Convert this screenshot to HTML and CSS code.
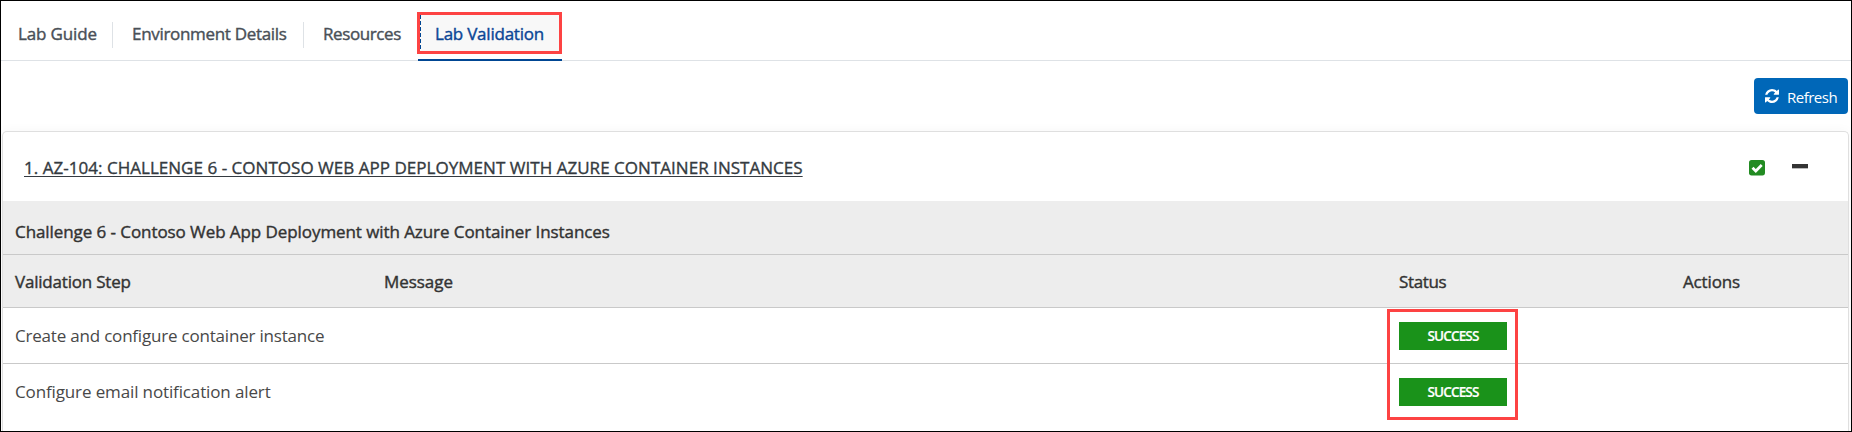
FILE: index.html
```html
<!DOCTYPE html>
<html lang="en">
<head>
<meta charset="utf-8">
<title>Lab Validation</title>
<link rel="stylesheet" href="styles.css">
</head>
<body>
<div class="frame">
  <nav class="tabs">
    <a class="tab tab-guide"><span class="t-guide">Lab Guide</span></a>
    <a class="tab tab-env"><span class="t-env">Environment Details</span></a>
    <a class="tab tab-res"><span class="t-res">Resources</span></a>
    <a class="tab tab-active"><span class="t-val">Lab Validation</span><i class="highlight"></i></a>
  </nav>
  <div class="toolbar">
    <button class="refresh">
      <svg width="14" height="14" viewBox="0 0 1536 1536" fill="#fff"><path d="M1511 928q0 5-1 7-64 268-268 434.500T764 1536q-146 0-282.500-55T238 1324l-129 129q-19 19-45 19t-45-19-19-45V960q0-26 19-45t45-19h448q26 0 45 19t19 45-19 45l-137 137q71 66 161 102t187 36q134 0 250-65t186-179q11-17 53-117 8-23 30-23h192q13 0 22.500 9.500t9.500 22.500zm25-800v448q0 26-19 45t-45 19h-448q-26 0-45-19t-19-45 19-45l138-138Q969 256 768 256q-134 0-250 65T332 500q-11 17-53 117-8 23-30 23H50q-13 0-22.500-9.500T18 608v-7q65-268 270-434.500T768 0q146 0 284 55.500T1297 212l130-129q19-19 45-19t45 19 19 45z"/></svg>
      <span class="t-refresh">Refresh</span>
    </button>
  </div>
  <section class="card">
    <header class="card-head">
      <a class="title">1. AZ-104: CHALLENGE 6 - CONTOSO WEB APP DEPLOYMENT WITH AZURE CONTAINER INSTANCES</a>
      <svg class="check" width="16" height="16" viewBox="0 0 16 16"><rect width="16" height="15.400" rx="2.600" fill="#228b22"/><path d="M3.500 7.700 6.800 11 12.700 5" fill="none" stroke="#fff" stroke-width="2.700"/></svg>
      <span class="minus"></span>
    </header>
    <div class="subtitle"><span class="t-sub">Challenge 6 - Contoso Web App Deployment with Azure Container Instances</span></div>
    <div class="row head">
      <span class="t-step">Validation Step</span><span class="t-msg">Message</span><span class="t-status">Status</span><span class="t-actions">Actions</span>
    </div>
    <div class="row">
      <span class="t-create">Create and configure container instance</span><span></span><span class="badge">SUCCESS</span><span></span>
      <i class="status-highlight"></i>
    </div>
    <div class="row last">
      <span class="t-conf">Configure email notification alert</span><span></span><span class="badge">SUCCESS</span><span></span>
    </div>
  </section>
</div>
</body>
</html>
```
FILE: styles.css
```css
* { box-sizing: border-box; }
body { margin: 0; background: #fff; font-family: "Open Sans", "Noto Sans", sans-serif; font-size: 17px; line-height: 24px; color: #333; }
.frame { width: 1852px; height: 432px; border: 1px solid #000; overflow: hidden; }
.tabs { display: flex; height: 60px; border-bottom: 1px solid #dee2e6; padding-top: 11px; }
.tab { position: relative; height: 49px; padding-top: 10px; padding-left: 19px; color: #495057; white-space: nowrap; -webkit-text-stroke: .4px; }
.tab-guide { width: 112px; padding-left: 17px; }
.tab-env { width: 191px; }
.tab-res { width: 114px; }
.tab-guide::after, .tab-env::after, .tab-res::after { content: ""; position: absolute; right: 0; top: 10px; width: 1px; height: 26px; background: #dee2e6; }
.tab-active { width: 144px; padding-left: 17px; color: #0b4696; border-bottom: 2px solid #004693; }
.tab-active .t-val { position: relative; z-index: 1; }
.t-guide { letter-spacing: -.15px; }
.t-env { letter-spacing: -.31px; }
.t-res { letter-spacing: -.4px; }
.t-val { letter-spacing: -.23px; }
.highlight { position: absolute; left: -1px; top: 0; width: 145px; height: 42px; border: 3px solid #fd4343; background: #f8f8f8; }
.highlight::before { content: ""; position: absolute; left: 0; top: 0; width: 1px; height: 36px; background: repeating-linear-gradient(#004693 0 4px, transparent 4px 6px); }
.toolbar { display: flex; justify-content: flex-end; height: 70px; padding: 17px 3px 0 0; }
.refresh { display: flex; align-items: center; width: 94px; height: 36px; padding: 0 0 0 11px; gap: 8px; border: 0; border-radius: 4px; background: #0067b8; color: #fff; font: 15px/20px "Open Sans", sans-serif; }
.refresh svg { margin-top: -1px; }
.t-refresh { margin-top: 1px; letter-spacing: -.5px; }
.card { width: 1847px; height: 301px; margin-left: 1px; border: 1px solid #dfdfdf; border-bottom: 0; border-radius: 5px 5px 0 0; box-shadow: 0 0 12px rgba(0,0,0,.04); background: #fff; }
.card-head { display: flex; height: 69px; padding-left: 21px; }
.title { width: 1725px; padding-top: 24px; color: #343a40; letter-spacing: .03px; text-decoration: underline; text-decoration-thickness: 1px; text-underline-offset: 2px; text-decoration-skip-ink: none; white-space: nowrap; -webkit-text-stroke: .35px; }
.check { margin-top: 28px; }
.minus { width: 16px; height: 5px; margin: 32px 0 0 27px; background: #343434; border-bottom: 1px solid #bbb; }
.subtitle { height: 54px; padding: 19px 0 0 12px; background: #ededed; border-bottom: 1px solid #c9c9c9; white-space: nowrap; -webkit-text-stroke: .4px; }
.t-sub { letter-spacing: -.075px; }
.row { position: relative; display: grid; grid-template-columns: 369px 1015px 284px 1fr; align-items: center; height: 56px; padding-left: 12px; border-bottom: 1px solid #c9c9c9; color: #484848; white-space: nowrap; }
.row.head { height: 53px; padding-top: 2px; background: #ededed; color: #333; -webkit-text-stroke: .4px; }
.row.last { border-bottom: 0; }
.t-step { letter-spacing: -.2px; }
.t-msg { letter-spacing: -.05px; }
.t-status { letter-spacing: -.35px; }
.t-actions { letter-spacing: -.15px; }
.t-create { letter-spacing: -.2px; }
.t-conf { letter-spacing: -.13px; }
.badge { width: 108px; height: 28px; background: #1a921a; color: #fff; text-align: center; font-size: 13.5px; font-weight: 600; line-height: 29px; letter-spacing: -.85px; -webkit-text-stroke: .2px; }
.status-highlight { position: absolute; left: 1384px; top: 1px; width: 131px; height: 111px; border: 3px solid #fd4343; z-index: 2; }
```
